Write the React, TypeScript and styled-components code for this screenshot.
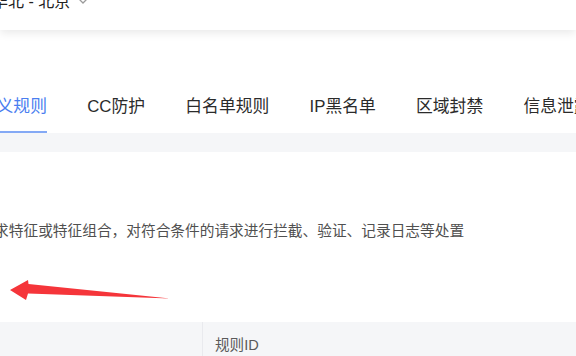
import React from "react";
import styled, { createGlobalStyle } from "styled-components";

const Global = createGlobalStyle`
  html, body { margin: 0; padding: 0; background: #fff; }
  body {
    width: 576px; height: 356px; overflow: hidden;
    font-family: "Liberation Sans", "Noto Sans CJK SC", sans-serif;
  }
`;

const Page = styled.div`
  position: relative;
  width: 576px;
  height: 356px;
  overflow: hidden;
  display: flex;
  flex-direction: column;
`;

const Header = styled.header`
  position: relative;
  z-index: 2;
  height: 30px;
  background: #fff;
  box-shadow: 0 3px 10px rgba(0, 0, 0, 0.09);
  display: flex;
  align-items: flex-start;
`;

const Region = styled.div`
  margin-top: -10px;
  margin-left: -8px;
  display: flex;
  align-items: center;
  gap: 8px;
  font-size: 16px;
  line-height: 24px;
  color: #222;
`;

const TabsWrap = styled.div`
  padding-top: 65px;
  background: #fff;
`;

const TabList = styled.nav`
  display: flex;
  gap: 40.3px;
  margin-left: -37px;
`;

const Tab = styled.div<{ $active?: boolean }>`
  flex: none;
  font-size: 16.8px;
  line-height: 24px;
  padding-bottom: 12px;
  color: ${(p) => (p.$active ? "#4a7ef0" : "#2b2b2b")};
  border-bottom: 2px solid ${(p) => (p.$active ? "#84a9f5" : "transparent")};
  white-space: nowrap;
`;

const Band = styled.div`
  height: 19px;
  background: #f5f6f8;
`;

const Body = styled.section`
  position: relative;
  flex: 1;
  display: flex;
  flex-direction: column;
`;

const Desc = styled.p`
  margin: 69px 0 0 -50px;
  font-size: 14.7px;
  line-height: 20px;
  color: #505050;
  white-space: nowrap;
`;

const Arrow = styled.svg`
  position: absolute;
  left: 8px;
  top: 126px;
`;

const TableHead = styled.div`
  margin-top: auto;
  height: 34px;
  background: #f5f6f8;
  display: grid;
  grid-template-columns: 202px 1fr;
`;

const HeadCell = styled.div<{ $divider?: boolean }>`
  border-left: ${(p) => (p.$divider ? "1px solid #e9eaee" : "none")};
  padding: 13px 0 0 12px;
  font-size: 14.6px;
  line-height: 20px;
  color: #5a5a5a;
`;

const tabs = ["自定义规则", "CC防护", "白名单规则", "IP黑名单", "区域封禁", "信息泄露防护"];

export default function App() {
  return (
    <Page>
      <Global />
      <Header>
        <Region>
          <span>华北 - 北京</span>
          <svg width="10" height="8" viewBox="0 0 10 8">
            <path d="M1.5 1.5 L5 5 L8.5 1.5" fill="none" stroke="#9a9a9a" strokeWidth="1.3" />
          </svg>
        </Region>
      </Header>
      <TabsWrap>
        <TabList>
          {tabs.map((t, i) => (
            <Tab key={t} $active={i === 0}>
              {t}
            </Tab>
          ))}
        </TabList>
      </TabsWrap>
      <Band />
      <Body>
        <Desc>基于请求特征或特征组合，对符合条件的请求进行拦截、验证、记录日志等处置</Desc>
        <Arrow width="170" height="30" viewBox="0 0 170 30">
          <path
            d="M2 12 L20 2 L20.5 6 L162 20.5 L20 15.5 L18 22 Z"
            fill="#f5353a"
          />
        </Arrow>
        <TableHead>
          <HeadCell />
          <HeadCell $divider>规则ID</HeadCell>
        </TableHead>
      </Body>
    </Page>
  );
}
